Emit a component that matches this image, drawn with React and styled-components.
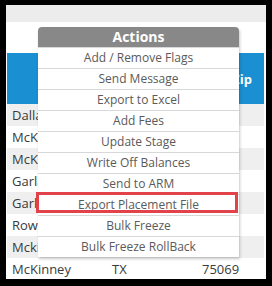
import styled, { createGlobalStyle } from "styled-components";

const Global = createGlobalStyle`
    html, body {
        margin: 0;
        padding: 0;
        background: #000;
    }
    body {
        font-family: "Open Sans", "Noto Sans", sans-serif;
    }
`

const Frame = styled.div`
    position: relative;
    width: 260px;
    height: 274px;
    margin: 5px 0 0 6px;
    background: #fff;
    overflow: hidden;
`

const TopBar = styled.div`
    height: 17px;
    background: #ececec;
`

const Gap = styled.div`
    height: 31px;
`

const Table = styled.div`
    margin-left: 1px;
    width: 257px;
`

const HeadRow = styled.div`
    display: grid;
    grid-template-columns: 100px 90px 1fr;
    align-items: center;
    height: 51px;
    background: #1a8fd1;
    color: #fff;
    font-weight: 700;
    font-size: 13px;
`

const HeadCell = styled.div`
    padding: 0 ${({ $pr }) => $pr || 5}px 0 5px;
    text-align: ${({ $align }) => $align || "center"};
`

const Row = styled.div`
    display: grid;
    grid-template-columns: 100px 90px 1fr;
    align-items: center;
    height: 22px;
    background: ${({ $alt }) => ($alt ? "#efefef" : "#fff")};
    color: #3a3a3a;
    font-size: 13px;
`

const Cell = styled.div`
    padding: 0 ${({ $pr }) => $pr || 5}px 0 5px;
    text-align: ${({ $align }) => $align || "left"};
    white-space: nowrap;
`

const Menu = styled.div`
    position: absolute;
    left: 32px;
    top: 22px;
    width: 201px;
    background: #fff;
    border-radius: 4px 4px 0 0;
    box-shadow: 1px 2px 3px rgba(0, 0, 0, 0.22);
`

const MenuHead = styled.div`
    height: 20px;
    line-height: 20px;
    background: #888;
    border-radius: 4px 4px 0 0;
    color: #fff;
    font-weight: 700;
    font-size: 14px;
    text-align: center;
`

const MenuItem = styled.div`
    height: 20px;
    line-height: 20px;
    border-top: 1px solid #d8d8d8;
    color: #5a5a5a;
    font-size: 12px;
    text-align: center;
    white-space: nowrap;
`

const Highlight = styled.div`
    position: absolute;
    left: 30px;
    top: 187px;
    width: 196px;
    height: 15px;
    border: 3px solid #e2424a;
`

const rows = [
    ["Dallas", "TX", "75201"],
    ["McKinney", "TX", "75070"],
    ["McKinney", "TX", "75071"],
    ["Garland", "TX", "75040"],
    ["Garland", "TX", "75043"],
    ["Rowlett", "TX", "75088"],
    ["Mckinney", "TX", "75072"],
    ["McKinney", "TX", "75069"],
]

const actions = [
    "Add / Remove Flags",
    "Send Message",
    "Export to Excel",
    "Add Fees",
    "Update Stage",
    "Write Off Balances",
    "Send to ARM",
    "Export Placement File",
    "Bulk Freeze",
    "Bulk Freeze RollBack",
]

export default function App() {
    return (
        <>
            <Global />
            <Frame>
                <TopBar />
                <Gap />
                <Table>
                    <HeadRow>
                        <HeadCell>City</HeadCell>
                        <HeadCell>State</HeadCell>
                        <HeadCell $align="right" $pr={12}>Zip</HeadCell>
                    </HeadRow>
                    {rows.map((r, i) => (
                        <Row key={i} $alt={i % 2 === 0}>
                            <Cell>{r[0]}</Cell>
                            <Cell>{r[1]}</Cell>
                            <Cell $align="right" $pr={28}>{r[2]}</Cell>
                        </Row>
                    ))}
                </Table>
                <Menu>
                    <MenuHead>Actions</MenuHead>
                    {actions.map((a) => (
                        <MenuItem key={a}>{a}</MenuItem>
                    ))}
                </Menu>
                <Highlight />
            </Frame>
        </>
    )
}
